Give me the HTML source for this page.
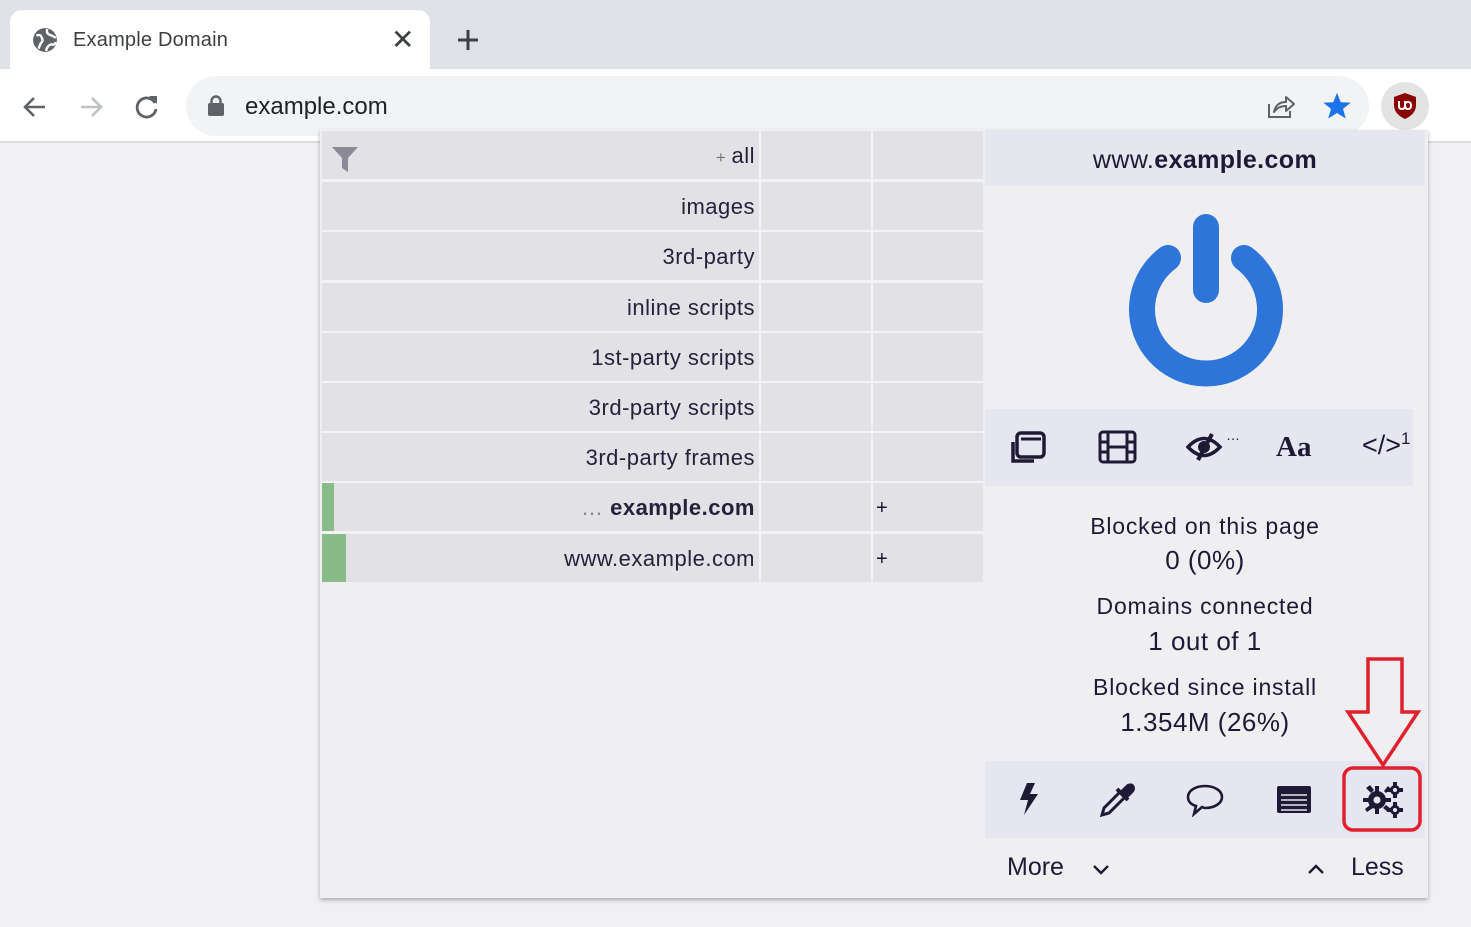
<!DOCTYPE html>
<html><head><meta charset="utf-8"><style>
*{margin:0;padding:0;box-sizing:border-box}
body{width:1471px;height:927px;overflow:hidden;background:#f1f1f3;font-family:"Liberation Sans",sans-serif;position:relative;color:#1a1530}
.abs{position:absolute}
.row{position:absolute;left:322px;width:661px;height:48px}
.row .c1{position:absolute;left:0;top:0;width:437px;height:48px;background:#e2e1e6;text-align:right;padding-right:4px;font-size:22px;letter-spacing:.5px;line-height:50px;color:#26213a;white-space:nowrap}
.row .c2{position:absolute;left:439px;top:0;width:110px;height:48px;background:#e2e1e6}
.row .c3{position:absolute;left:551px;top:0;width:110px;height:48px;background:#e2e1e6;font-size:20px;line-height:50px;padding-left:3px}
.st{position:absolute;left:985px;width:440px;text-align:center;font-size:23px;letter-spacing:.8px;color:#1e1a36}
.sv{font-size:26px;letter-spacing:.5px}
</style></head><body>
<div class="abs" style="left:0;top:0;width:1471px;height:69px;background:#dee1e6"></div>
<div class="abs" style="left:10px;top:10px;width:420px;height:62px;background:#fff;border-radius:12px 12px 0 0"></div>
<svg class="abs" style="left:32px;top:27px" width="26" height="26" viewBox="0 0 24 24"><circle cx="12" cy="12" r="11" fill="#5f6368"/><path d="M4 8 Q8 6 9 10 Q11 13 8 15 L6 20 M14 2 Q13 6 16 7 Q19 8 22 10 M13 22 Q14 17 18 16 Q21 17 22 14" stroke="#fff" stroke-width="2.2" fill="none"/></svg>
<div class="abs" style="left:73px;top:29px;font-size:20px;color:#3c4043;letter-spacing:.2px">Example Domain</div>
<div class="abs" style="left:391px;top:23px;font-size:28px;color:#3c4043">✕</div>
<svg class="abs" style="left:456px;top:28px" width="24" height="24"><path d="M12 2V22M2 12H22" stroke="#3c4043" stroke-width="3"/></svg>
<div class="abs" style="left:0;top:69px;width:1471px;height:74px;background:#fff;border-bottom:2px solid #dadce0"></div>
<svg class="abs" style="left:20px;top:92px" width="30" height="30"><path d="M25 15H5M14 6L5 15L14 24" stroke="#5f6368" stroke-width="2.6" fill="none"/></svg>
<svg class="abs" style="left:76px;top:92px" width="30" height="30"><path d="M5 15H25M16 6L25 15L16 24" stroke="#bdc1c6" stroke-width="2.6" fill="none"/></svg>
<svg class="abs" style="left:132px;top:91px" width="30" height="30"><path d="M23 12A9.5 9.5 0 1 0 24 18" stroke="#5f6368" stroke-width="2.8" fill="none"/><path d="M17 5H25V13Z" fill="#5f6368"/></svg>
<div class="abs" style="left:186px;top:76px;width:1183px;height:60px;background:#f1f3f4;border-radius:30px"></div>
<svg class="abs" style="left:207px;top:95px" width="18" height="22"><rect x="1" y="8" width="16" height="13" rx="2" fill="#5f6368"/><path d="M4.5 9V6A4.5 4.5 0 0 1 13.5 6V9" stroke="#5f6368" stroke-width="2.4" fill="none"/></svg>
<div class="abs" style="left:245px;top:93px;font-size:24px;color:#202124">example.com</div>
<svg class="abs" style="left:1266px;top:92px" width="30" height="28"><path d="M3 12V25H24V19" stroke="#5f6368" stroke-width="2" fill="none"/><path d="M8 20Q10 10 20 10V5L28 12L20 19V14Q12 14 8 20Z" stroke="#5f6368" stroke-width="2" fill="none" stroke-linejoin="round"/></svg>
<svg class="abs" style="left:1322px;top:91px" width="30" height="30" viewBox="0 0 24 24"><path d="M12 1.5L15 9L23 9.3L16.8 14.3L19 22L12 17.6L5 22L7.2 14.3L1 9.3L9 9Z" fill="#1a73e8"/></svg>
<div class="abs" style="left:1381px;top:82px;width:48px;height:48px;border-radius:50%;background:#e3e3e3"></div>
<svg class="abs" style="left:1392px;top:92px" width="26" height="28" viewBox="0 0 26 28"><path d="M13 1L24 5V13Q24 22 13 27Q2 22 2 13V5Z" fill="#800"/><path d="M7 9V14Q7 17 10 17Q13 17 13 14V9M13 13Q13 10 16 10Q19 10 19 13.5Q19 17 16 17Q13 17 13 13.5" stroke="#fff" stroke-width="2" fill="none"/></svg>
<div class="abs" style="left:320px;top:130px;width:1108px;height:768px;background:#efeff2;box-shadow:0 2px 4px rgba(0,0,0,.3)"></div>
<div class="abs" style="left:322px;top:130px;width:661px;height:452px;background:#f3f3f5"></div>
<div class="row" style="top:131px"><div class="c1"><span style="color:#777;font-size:17px">+ </span>all</div><div class="c2"></div><div class="c3"></div></div>
<svg class="abs" style="left:331px;top:146px" width="28" height="28"><path d="M1 1H27L17 12V26L11 22V12Z" fill="#8c8a94"/></svg>
<div class="row" style="top:182px"><div class="c1">images</div><div class="c2"></div><div class="c3"></div></div>
<div class="row" style="top:232px"><div class="c1">3rd-party</div><div class="c2"></div><div class="c3"></div></div>
<div class="row" style="top:283px"><div class="c1">inline scripts</div><div class="c2"></div><div class="c3"></div></div>
<div class="row" style="top:333px"><div class="c1">1st-party scripts</div><div class="c2"></div><div class="c3"></div></div>
<div class="row" style="top:383px"><div class="c1">3rd-party scripts</div><div class="c2"></div><div class="c3"></div></div>
<div class="row" style="top:433px"><div class="c1">3rd-party frames</div><div class="c2"></div><div class="c3"></div></div>
<div class="row" style="top:483px"><div class="c1"><span style="color:#888">… </span><b>example.com</b></div><div class="c2"></div><div class="c3">+</div></div>
<div class="abs" style="left:322px;top:483px;width:12px;height:48px;background:#88bb88"></div>
<div class="row" style="top:534px"><div class="c1">www.example.com</div><div class="c2"></div><div class="c3">+</div></div>
<div class="abs" style="left:322px;top:534px;width:24px;height:48px;background:#88bb88"></div>
<div class="abs" style="left:985px;top:130px;width:440px;height:56px;background:#e5e6ee;text-align:center;font-size:25px;letter-spacing:.4px;line-height:60px;color:#1e1a36">www.<b>example.com</b></div>
<svg class="abs" style="left:1120px;top:210px" width="172" height="180"><path d="M48 48A64 64 0 1 0 124 48" stroke="#2e75d9" stroke-width="26" fill="none" stroke-linecap="round"/><path d="M86 17V80" stroke="#2e75d9" stroke-width="26" stroke-linecap="round"/></svg>
<div class="abs" style="left:985px;top:409px;width:428px;height:77px;background:#e5e6f0"></div>
<svg class="abs" style="left:1010px;top:428px" width="40" height="38"><rect x="7" y="5" width="27" height="24" rx="4" stroke="#1e1a36" stroke-width="3.5" fill="none"/><path d="M11 11H31" stroke="#1e1a36" stroke-width="3"/><path d="M3 14V33H24" stroke="#1e1a36" stroke-width="3.5" fill="none"/></svg>
<svg class="abs" style="left:1098px;top:430px" width="40" height="34"><rect x="2" y="2" width="35" height="30" rx="3" stroke="#1e1a36" stroke-width="3" fill="none"/><path d="M10 2V32M29 2V32M2 12H10M2 22H10M29 12H37M29 22H37M10 17H29" stroke="#1e1a36" stroke-width="3"/></svg>
<svg class="abs" style="left:1186px;top:430px" width="56" height="34"><path d="M2 17Q18 0 34 17Q18 34 2 17Z" stroke="#1e1a36" stroke-width="3.5" fill="none"/><circle cx="18" cy="17" r="6" fill="#1e1a36"/><path d="M26 4L12 30" stroke="#1e1a36" stroke-width="4"/><text x="40" y="10" font-size="14" fill="#1e1a36" font-family="Liberation Sans">…</text></svg>
<div class="abs" style="left:1276px;top:431px;font-family:'Liberation Serif',serif;font-weight:bold;font-size:29px;color:#1e1a36">Aa</div>
<div class="abs" style="left:1362px;top:429px;font-size:27px;color:#1e1a36">&lt;/&gt;<sup style="font-size:17px;color:#1e1a36">1</sup></div>
<div class="st" style="top:513px">Blocked on this page</div>
<div class="st sv" style="top:545px">0 (0%)</div>
<div class="st" style="top:593px">Domains connected</div>
<div class="st sv" style="top:626px">1 out of 1</div>
<div class="st" style="top:674px">Blocked since install</div>
<div class="st sv" style="top:707px">1.354M (26%)</div>
<div class="abs" style="left:985px;top:761px;width:440px;height:77px;background:#e5e6f0"></div>
<svg class="abs" style="left:1018px;top:781px" width="24" height="36"><path d="M9 2L2 19H10L6 34L20 13H12L17 2Z" fill="#1e1a36"/></svg>
<svg class="abs" style="left:1098px;top:781px" width="38" height="38"><path d="M4 34L6 27L22 11L27 16L11 32Z" stroke="#1e1a36" stroke-width="3" fill="none"/><path d="M19 8L30 19M24 11L30 5Q34 3 35 7Q35 9 33 11L27 17" stroke="#1e1a36" stroke-width="4" fill="#1e1a36"/></svg>
<svg class="abs" style="left:1186px;top:783px" width="38" height="34"><path d="M19 3C9 3 2 8 2 14C2 19 6 22 10 23L8 31L16 24Q18 25 19 25C29 25 36 20 36 14C36 8 29 3 19 3Z" stroke="#1e1a36" stroke-width="2.6" fill="none"/></svg>
<svg class="abs" style="left:1276px;top:785px" width="36" height="30"><rect x="1" y="1" width="34" height="27" rx="2" fill="#1e1a36"/><path d="M5 10H31M5 15H31M5 20H31M5 25H31" stroke="#e5e6f0" stroke-width="1.5"/></svg>
<svg class="abs" style="left:1362px;top:780px" width="42" height="38"><g fill="#1e1a36"><circle cx="15" cy="20" r="9"/><path d="M13 6h4v6h-4zM13 28h4v6h-4zM1 18h6v4H1zM23 18h6v4h-6zM4 8l4-3 4 5-3 3zM21 28l3-3 5 4-3 3zM5 32l-2-3 5-4 3 3zM22 11l4-5 3 3-5 4z"/><circle cx="33" cy="10" r="5"/><circle cx="33" cy="30" r="5"/><path d="M31 2h4v16h-4zM25 8h16v4H25zM31 22h4v16h-4zM25 28h16v4H25z"/></g><circle cx="15" cy="20" r="3.5" fill="#e5e6f0"/><circle cx="33" cy="10" r="2" fill="#e5e6f0"/><circle cx="33" cy="30" r="2" fill="#e5e6f0"/></svg>
<div class="abs" style="left:1007px;top:853px;font-size:25px;color:#1e1a36">More</div>
<svg class="abs" style="left:1092px;top:862px" width="18" height="14"><path d="M2 4L9 11L16 4" stroke="#1e1a36" stroke-width="2.4" fill="none"/></svg>
<svg class="abs" style="left:1307px;top:862px" width="18" height="14"><path d="M2 11L9 4L16 11" stroke="#1e1a36" stroke-width="2.4" fill="none"/></svg>
<div class="abs" style="left:1351px;top:853px;font-size:25px;color:#1e1a36">Less</div>
<svg class="abs" style="left:1340px;top:655px" width="86" height="180"><path d="M28 4H62V57H78L43 110L8 57H28Z" stroke="#e0202c" stroke-width="3.5" fill="none" stroke-linejoin="miter"/><rect x="4" y="113" width="76" height="62" rx="9" stroke="#e0202c" stroke-width="3.5" fill="none"/></svg>
</body></html>
